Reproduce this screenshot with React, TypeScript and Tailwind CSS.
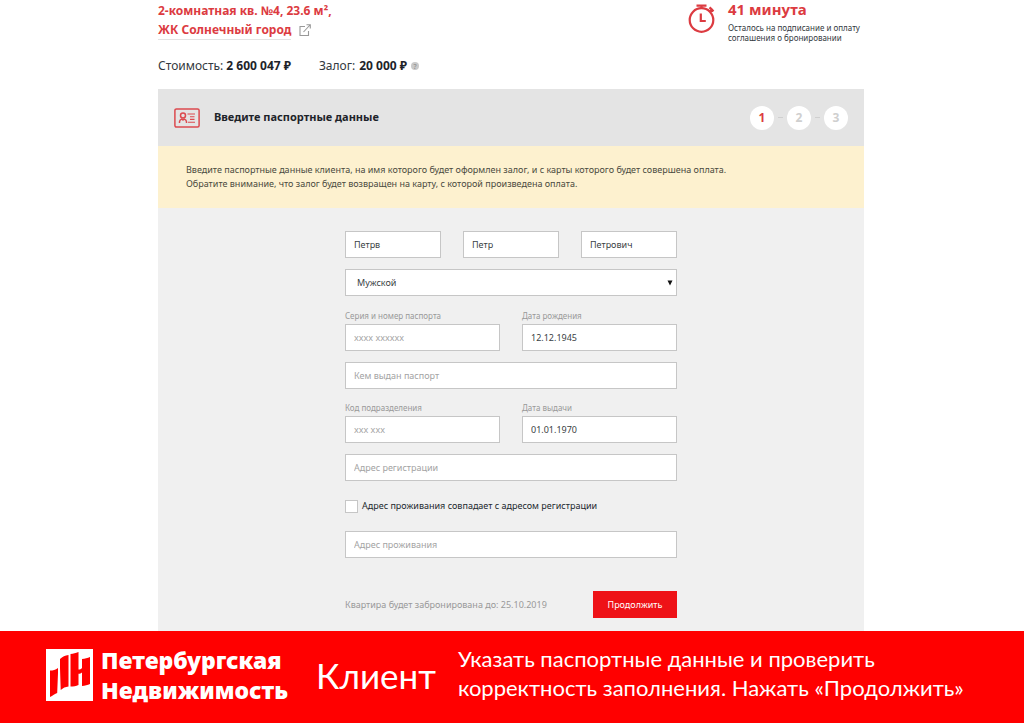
import { ReactNode } from "react";

const inputClass =
  "block h-[27px] w-full min-w-0 rounded-none border border-[#c6c6c6] bg-white px-2 text-[9px] text-[#3a3f44] placeholder:text-[#a3a3a3] placeholder:opacity-100";

function TextField({ label, value, placeholder }: { label: string; value?: string; placeholder?: string }) {
  return (
    <input
      type="text"
      aria-label={label}
      defaultValue={value}
      placeholder={placeholder}
      className={inputClass}
    />
  );
}

function LabeledField({ id, label, value, placeholder }: { id: string; label: string; value?: string; placeholder?: string }) {
  return (
    <div className="flex-1">
      <label htmlFor={id} className="mb-[2px] block text-[8px] leading-3 text-[#999]">
        {label}
      </label>
      <input
        id={id}
        type="text"
        defaultValue={value}
        placeholder={placeholder}
        className={inputClass}
      />
    </div>
  );
}

function Step({ active, children }: { active?: boolean; children: ReactNode }) {
  return (
    <li
      className={
        active
          ? "flex size-6 items-center justify-center rounded-full bg-white text-xs font-bold text-[#dc3b41]"
          : "flex size-6 items-center justify-center rounded-full bg-white text-xs font-bold text-[#cfcfcf]"
      }
    >
      {children}
    </li>
  );
}

function TimerIcon() {
  return (
    <svg viewBox="0 0 28 32" className="h-8 w-7 shrink-0" fill="none" stroke="#dc3b41" strokeWidth="2.2">
      <circle cx="13.5" cy="19" r="11.8" />
      <path d="M8.5 4.6h10M13.5 4.6v3M21.5 6.4l4 4M24.4 7.6l-2.4 2.6" />
      <path d="M12.8 12.5V20h5" />
    </svg>
  );
}

function PassportIcon() {
  return (
    <svg viewBox="0 0 26 20" className="h-5 w-[26px] shrink-0" fill="none" stroke="#dc4a4f" strokeWidth="1.5">
      <rect x="0.9" y="0.9" width="24.2" height="18.2" rx="1.5" />
      <circle cx="9" cy="7.5" r="2.5" />
      <path d="M5.5 15v-1.2c0-1.5 1-2.3 2.4-2.8L9 12l1.1-1c1.4.5 2.4 1.3 2.4 2.8V15" />
      <path d="M13.5 6H21M16 8.8h4.5M16 11.4h4.5M14 14.2h7" strokeWidth="1.1" />
    </svg>
  );
}

function ExternalIcon() {
  return (
    <svg viewBox="0 0 12 12" className="size-3" fill="none" stroke="#999" strokeWidth="1.1">
      <path d="M6 2.5H1v9h8.5V7M4.5 8L11 1M7.5.8h3.8v3.8" />
    </svg>
  );
}

function LogoMark() {
  return (
    <svg viewBox="0 0 47 52" className="h-[52px] w-[47px] shrink-0">
      <path fill="#fff" d="M0 0h47v52H0z" />
      <g fill="#f00">
        <path d="M4 21.5c3 0 5.500-.5 8-2.500V24l-.8 20c-2.200 1-4.500 2.500-7.200 4z" />
        <path d="M14 19V10c2.500-2.500 5-3.500 8.500-4v31.500c-3 .3-5.500 1.500-7.800 3.500z" />
        <path d="M24.500 5c3-.2 5-.8 8-2v17.500c1.500 0 2.500-.5 3.500-1.500V10c3-.3 5.500-1 8-2v27c-2.500 1-5 1.600-8 2V23.500c-1 .8-2 1.200-3.500 1.300V36c-2.500 1-5 1.500-8 1.500z" />
      </g>
    </svg>
  );
}

export default function App() {
  return (
    <div className="min-h-screen bg-white font-['Noto_Sans',sans-serif] text-[#333940]">
      <div className="pr-0.5">
        <main className="mx-auto max-w-[706px]">
          <header className="flex h-[89px] justify-between">
            <div>
              <h1 className="pt-px text-[12px] leading-[19px] font-bold text-[#dc3b41]">
                2-комнатная кв. №4, 23.6 м²,
                <span className="flex items-center gap-2">
                  <a href="#complex" className="border-b border-[#e3e3e3]">
                    ЖК Солнечный город
                  </a>
                  <ExternalIcon />
                </span>
              </h1>
              <div className="mt-4 flex gap-7 text-[12px] leading-5">
                <p>
                  Стоимость: <b className="text-[#1d2329]">2 600 047 ₽</b>
                </p>
                <p className="flex items-center gap-1">
                  Залог: <b className="text-[#1d2329]">20 000 ₽</b>
                  <button
                    type="button"
                    aria-label="Залог"
                    className="flex size-2 items-center justify-center rounded-full bg-[#c9c9c9] text-[7px] leading-none text-[#888]"
                  >
                    ?
                  </button>
                </p>
              </div>
            </div>
            <div className="flex gap-3 pt-px">
              <TimerIcon />
              <div className="w-[136px]">
                <p className="text-[15px] leading-4 font-bold text-[#dc3b41]">41 минута</p>
                <p className="mt-1.5 text-[8px] leading-[10px]">
                  Осталось на подписание и оплату
                  <br />
                  соглашения о бронировании
                </p>
              </div>
            </div>
          </header>

          <section className="bg-[#f0f0f0]">
            <div className="flex h-[57px] items-center justify-between bg-[#e4e4e4] px-4">
              <h2 className="flex items-center gap-[14px] text-[11px] font-bold text-[#1d2329]">
                <PassportIcon />
                Введите паспортные данные
              </h2>
              <ol className="flex items-center gap-1 text-[#cfcfcf]">
                <Step active>1</Step>
                <li aria-hidden="true" className="h-px w-[5px] bg-[#cfcfcf]" />
                <Step>2</Step>
                <li aria-hidden="true" className="h-px w-[5px] bg-[#cfcfcf]" />
                <Step>3</Step>
              </ol>
            </div>

            <p className="bg-[#fdf1cf] px-7 py-[17px] text-[9px] leading-[14px] text-[#4a4a40]">
              Введите паспортные данные клиента, на имя которого будет оформлен залог, и с карты которого будет совершена оплата.
              <br />
              Обратите внимание, что залог будет возвращен на карту, с которой произведена оплата.
            </p>

            <form className="mx-auto flex max-w-[332px] flex-col gap-[11px] pt-[23px] pb-[13px]">
              <div className="flex gap-[22px]">
                <TextField label="Фамилия" value="Петрв" />
                <TextField label="Имя" value="Петр" />
                <TextField label="Отчество" value="Петрович" />
              </div>
              <div className="relative">
                <select aria-label="Пол" className={`${inputClass} appearance-none pl-[11px]`}>
                  <option>Мужской</option>
                </select>
                <svg viewBox="0 0 6 6" className="pointer-events-none absolute top-[11px] right-1 size-[6px]">
                  <path d="M.5.5h5L3 5.5z" fill="#111" />
                </svg>
              </div>
              <div className="mt-[3px] flex gap-[22px]">
                <LabeledField id="passport" label="Серия и номер паспорта" placeholder="xxxx xxxxxx" />
                <LabeledField id="birth" label="Дата рождения" value="12.12.1945" />
              </div>
              <TextField label="Кем выдан паспорт" placeholder="Кем выдан паспорт" />
              <div className="mt-[2px] flex gap-[22px]">
                <LabeledField id="code" label="Код подразделения" placeholder="xxx xxx" />
                <LabeledField id="issued" label="Дата выдачи" value="01.01.1970" />
              </div>
              <TextField label="Адрес регистрации" placeholder="Адрес регистрации" />
              <label className="my-[7px] flex h-[14px] items-center gap-1 text-[9px] text-[#22282e]">
                <input type="checkbox" className="size-[13px] appearance-none border border-[#c6c6c6] bg-white" />
                Адрес проживания совпадает с адресом регистрации
              </label>
              <TextField label="Адрес проживания" placeholder="Адрес проживания" />
              <div className="mt-[22px] flex items-center justify-between">
                <p className="text-[9px] text-[#999]">Квартира будет забронирована до: 25.10.2019</p>
                <button type="submit" className="h-[27px] w-[84px] bg-[#ee1217] text-[9px] text-white">
                  Продолжить
                </button>
              </div>
            </form>
          </section>
        </main>
      </div>

      <footer className="flex h-[92px] items-center bg-[#f00] pb-1 pl-[46px] text-white">
        <div className="flex items-center gap-2">
          <LogoMark />
          <p className="text-[23px] leading-[30px] font-black">
            Петербургская
            <br />
            Недвижимость
          </p>
        </div>
        <p className="ml-7 font-[Lato,sans-serif] text-[35px] leading-none">Клиент</p>
        <p className="ml-[22px] pb-1 font-[Lato,sans-serif] text-[22px] leading-[29px]">
          Указать паспортные данные и проверить
          <br />
          корректность заполнения. Нажать «Продолжить»
        </p>
      </footer>
    </div>
  );
}
